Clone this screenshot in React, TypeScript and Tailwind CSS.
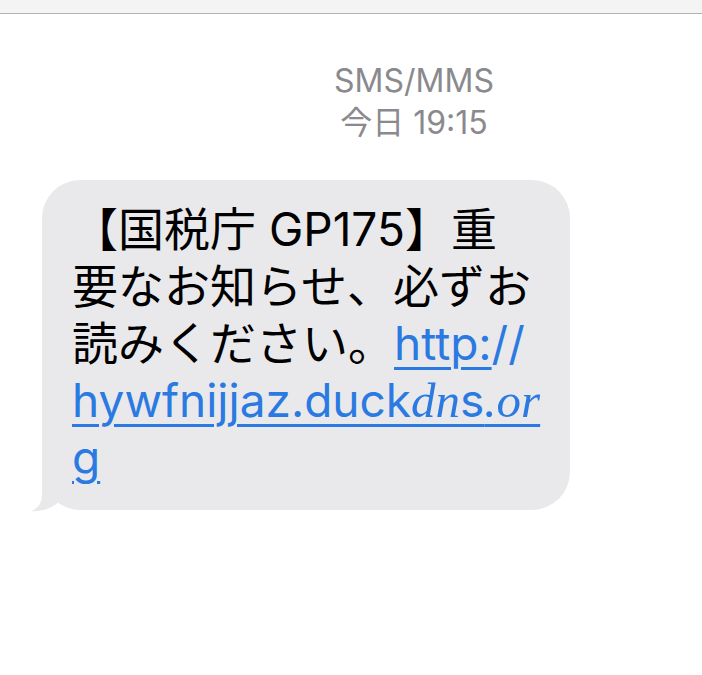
import { FC } from 'react';

const sans = "font-['Inter','Noto_Sans_CJK_JP',sans-serif]";
const link = 'text-[#2a7ae2] underline decoration-[3px] underline-offset-[7px]';
const ital = "font-['Liberation_Serif',serif] italic text-[49px]";

const Bubble: FC = () => (
  <div className="relative ml-[42px] w-[528px] rounded-[38px] bg-[#e9e9eb] pt-[21px] pb-[24px] pl-[30px]">
    <svg
      className="absolute -left-[12px] -bottom-[2px]"
      width="32"
      height="44"
      viewBox="0 0 32 44"
      aria-hidden="true"
    >
      <path d="M12,3 L12,27 Q12,39 1,43 Q16,45 30,33 L30,3 Z" fill="#e9e9eb" />
    </svg>
    <div className={`${sans} text-[46px] leading-[57px] text-black whitespace-nowrap`}>
      <div>【国税庁 GP175】重</div>
      <div>要なお知らせ、必ずお</div>
      <div>
        読みください。<span className={link}>http:</span>
        <span className="text-[#2a7ae2]">//</span>
      </div>
      <div className={link}>
        hywfnijjaz.duck<span className={ital}>dn</span>s<span className={ital}>.or</span>
      </div>
      <div className={link}>g</div>
    </div>
  </div>
);

export default function App() {
  return (
    <div className="min-h-[675px] bg-white">
      <div className="h-[14px] border-b border-[#b3b3b3] bg-[#f4f4f4]" />
      <div
        className={`${sans} mt-[46px] pl-[126px] text-center text-[32px] leading-[42px] text-[#8a8a8e]`}
      >
        <div>SMS/MMS</div>
        <div>今日 19:15</div>
      </div>
      <div className="mt-[36px]">
        <Bubble />
      </div>
    </div>
  );
}
